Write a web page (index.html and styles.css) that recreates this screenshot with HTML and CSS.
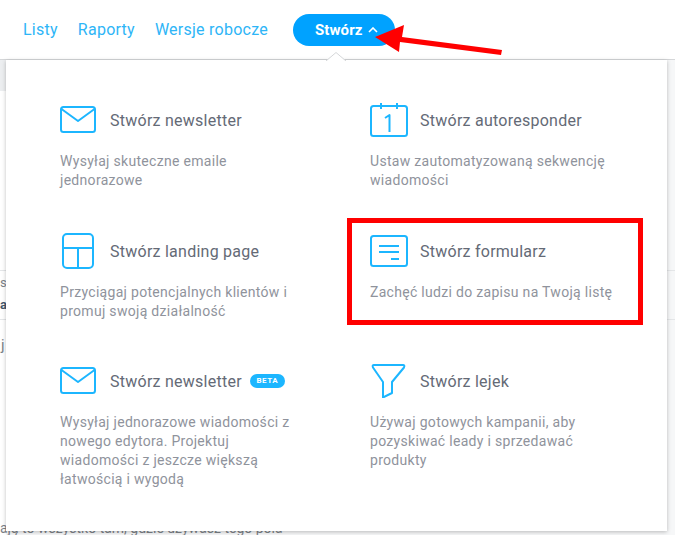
FILE: index.html
```html
<!DOCTYPE html>
<html lang="pl">
<head>
    <meta charset="UTF-8">
    <meta name="viewport" content="width=device-width, initial-scale=1.0">
    <title>Stwórz</title>
    <link rel="stylesheet" href="styles.css">
</head>
<body>
    <header class="topbar">
        <a class="top-link" href="#">Listy</a>
        <a class="top-link" href="#">Raporty</a>
        <a class="top-link" href="#">Wersje robocze</a>
        <button class="create-button">Stwórz
            <svg class="chevron" width="10" height="6" viewBox="0 0 10 6"><path d="M1 5l4-4 4 4" fill="none" stroke="#fff" stroke-width="1.6"/></svg>
        </button>
    </header>

    <div class="behind">
        <div class="behind-band"></div>
        <div class="behind-row">
            <span class="behind-s">s</span>
            <span class="behind-a">a</span>
        </div>
        <span class="behind-j">j</span>
        <p class="behind-text">ają to wszystko tam, gdzie używasz tego pola</p>
    </div>

    <div class="menu">
        <svg class="menu-tip" width="20" height="9" viewBox="0 0 20 9"><path d="M0 9L10 .5 20 9" fill="#fff" stroke="#d5d7d9"/></svg>
        <div class="menu-grid">
            <div class="item">
                <div class="item-head">
                    <svg class="icon" width="38" height="28" viewBox="0 0 38 28"><rect x="1" y="1" width="34" height="25" rx="2.5"/><path d="M1.500 3L18 15 34.500 3"/></svg>
                    <h2>Stwórz newsletter</h2>
                </div>
                <p>Wysyłaj skuteczne emaile<br>jednorazowe</p>
            </div>
            <div class="item">
                <div class="item-head">
                    <svg class="icon" width="38" height="34" viewBox="0 0 38 34"><rect x="1" y="3" width="36" height="30" rx="2.5"/><path d="M11 0v6M27 0v6M15 15l4.500-3v17"/></svg>
                    <h2>Stwórz autoresponder</h2>
                </div>
                <p>Ustaw zautomatyzowaną sekwencję<br>wiadomości</p>
            </div>
            <div class="item">
                <div class="item-head">
                    <svg class="icon" width="38" height="36" viewBox="0 0 38 36"><rect x="3" y="1" width="30" height="34" rx="4"/><path d="M3 15h30M18 15v20"/></svg>
                    <h2>Stwórz landing page</h2>
                </div>
                <p>Przyciągaj potencjalnych klientów i<br>promuj swoją działalność</p>
            </div>
            <div class="item">
                <div class="item-head">
                    <svg class="icon" width="38" height="32" viewBox="0 0 38 32"><rect x="1" y="1" width="36" height="30" rx="2.500"/><path d="M9 11h20M9 17h20M21 24h8"/></svg>
                    <h2>Stwórz formularz</h2>
                </div>
                <p>Zachęć ludzi do zapisu na Twoją listę</p>
            </div>
            <div class="item">
                <div class="item-head">
                    <svg class="icon" width="38" height="28" viewBox="0 0 38 28"><rect x="1" y="1" width="34" height="25" rx="2.500"/><path d="M1.500 3L18 15 34.500 3"/></svg>
                    <h2>Stwórz newsletter</h2>
                    <span class="badge">BETA</span>
                </div>
                <p>Wysyłaj jednorazowe wiadomości z<br>nowego edytora. Projektuj<br>wiadomości z jeszcze większą<br>łatwością i wygodą</p>
            </div>
            <div class="item">
                <div class="item-head">
                    <svg class="icon" width="38" height="34" viewBox="0 0 38 34"><path d="M4 1h29q2 0 1 2.500L22 18v11l-9 4.500V18L3 3.500Q2 1 4 1z"/></svg>
                    <h2>Stwórz lejek</h2>
                </div>
                <p>Używaj gotowych kampanii, aby<br>pozyskiwać leady i sprzedawać<br>produkty</p>
            </div>
        </div>
    </div>

    <div class="red-frame"></div>
    <svg class="red-arrow" width="132" height="32" viewBox="0 0 132 32"><path d="M4 12L33 0l-2 12 100 13-1 5L29 17l-1 10z" fill="#f00"/></svg>
</body>
</html>
```
FILE: styles.css
```css
:root {
    --blue: #1cb6ff;
    --button-blue: #00a2ff;
    --title-color: #646a76;
    --text-color: #8f939c;
}

* {
    box-sizing: border-box;
}

body {
    margin: 0;
    height: 535px;
    overflow: hidden;
    position: relative;
    background: #fff;
    font-family: "Roboto", sans-serif;
}

/* Top bar */
.topbar {
    height: 60px;
    padding: 14px 0 0 23px;
    display: flex;
    align-items: flex-start;
    border-bottom: 1px solid #d5d7d9;
}

.top-link {
    margin-right: 20px;
    height: 32px;
    line-height: 32px;
    font-size: 16px;
    letter-spacing: 0.25px;
    color: #2eb5f7;
    text-decoration: none;
}

.create-button {
    margin-left: 5px;
    width: 102px;
    height: 32px;
    display: flex;
    align-items: center;
    gap: 6px;
    padding: 0 0 0 22px;
    border: none;
    border-radius: 16px;
    background: var(--button-blue);
    color: #fff;
    font-family: inherit;
    font-size: 15px;
    font-weight: 700;
    letter-spacing: 0.1px;
}

/* Page under the menu */
.behind {
    height: 475px;
    background: linear-gradient(to right, #fff 6px, #f6f7f8 6px);
    color: #7d8288;
}

.behind-band {
    width: 6px;
    height: 31px;
    background: #eceef0;
}

.behind-row {
    width: 100%;
    height: 50px;
    margin-top: 179px;
    padding-top: 1px;
    border-top: 1px solid #e4e6e8;
    border-bottom: 1px solid #e4e6e8;
    font-size: 13px;
    line-height: 22px;
}

.behind-row span {
    display: block;
}

.behind-a {
    color: #44566c;
    font-weight: 700;
}

.behind-j {
    display: block;
    margin-top: 14px;
    padding-left: 1px;
    font-size: 15px;
    line-height: 22px;
}

.behind-text {
    margin: 164px 0 0;
    font-size: 14px;
    line-height: 16px;
    white-space: nowrap;
}

/* Dropdown */
.menu {
    position: absolute;
    left: 6px;
    top: 60px;
    width: 661px;
    height: 471px;
    padding: 36px 0 0 54px;
    background: #fff;
    box-shadow: 0 1px 4px rgba(0, 0, 0, 0.25);
}

.menu-tip {
    position: absolute;
    left: 320px;
    top: -8px;
}

.menu-grid {
    display: grid;
    grid-template-columns: 310px 270px;
    grid-template-rows: 131px 130px auto;
}

.item-head {
    height: 48px;
    display: flex;
    align-items: center;
}

.icon {
    flex: none;
    margin-right: 12px;
    fill: none;
    stroke: var(--blue);
    stroke-width: 2;
    stroke-linejoin: round;
}

.item h2 {
    margin: 0;
    font-size: 16px;
    font-weight: 400;
    letter-spacing: 0.25px;
    color: var(--title-color);
}

.item p {
    margin: 8px 0 0;
    font-size: 14px;
    line-height: 19px;
    letter-spacing: 0.3px;
    color: var(--text-color);
}

.badge {
    margin-left: 8px;
    width: 35px;
    height: 14px;
    border-radius: 7px;
    background: var(--blue);
    color: #fff;
    font-size: 8px;
    font-weight: 700;
    line-height: 14px;
    letter-spacing: 0.5px;
    text-align: center;
}

/* Annotations drawn over the screenshot */
.red-frame {
    position: absolute;
    left: 347px;
    top: 218px;
    width: 296px;
    height: 107px;
    border: 5px solid #f00;
}

.red-arrow {
    position: absolute;
    left: 371px;
    top: 25px;
}
```
